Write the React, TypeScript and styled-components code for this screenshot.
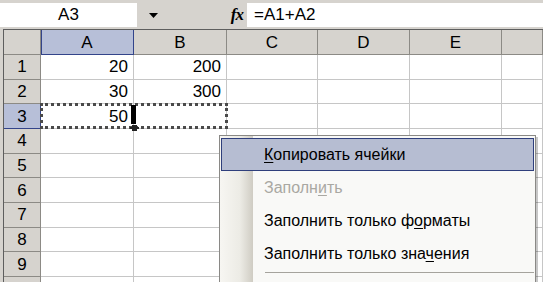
import React from 'react';
import styled, { createGlobalStyle } from 'styled-components';

const GlobalStyle = createGlobalStyle`
  html, body {
    margin: 0;
    padding: 0;
    background: #d6d3ce;
  }
  body {
    font-family: "Liberation Sans", Arial, sans-serif;
  }
`;

const Window = styled.div`
  position: relative;
  width: 543px;
  height: 282px;
  overflow: hidden;
  background: #d6d3ce;
  color: #000;
`;

const FormulaBar = styled.div`
  display: flex;
  align-items: stretch;
  height: 24px;
  padding: 3px 0 2px;
  font-size: 17px;
`;

const NameBox = styled.div`
  width: 137px;
  background: #fff;
  display: flex;
  align-items: center;
  justify-content: center;
`;

const DropButton = styled.div`
  width: 32px;
  display: flex;
  align-items: center;
  justify-content: center;
  padding-right: 6px;
`;

const FxLabel = styled.div`
  width: 68px;
  display: flex;
  align-items: center;
  justify-content: flex-end;
  padding-right: 4px;
  font-family: "Liberation Serif", "Times New Roman", serif;
  font-style: italic;
  font-weight: bold;
  font-size: 17px;
  letter-spacing: -1px;
`;

const FormulaInput = styled.div`
  flex: 1;
  background: #fff;
  display: flex;
  align-items: center;
  padding-left: 7px;
`;

const Sheet = styled.div`
  position: relative;
  margin-left: 3px;
  border-left: 1px solid #5e5e5e;
  border-top: 1px solid #5e5e5e;
  display: grid;
  grid-template-columns: 37px 93px 93px 91px 92px 92px 1fr;
  grid-template-rows: 25px repeat(10, 24.67px);
  background: #fff;
  font-size: 17px;
`;

const HeaderCell = styled.div<{ $active?: boolean }>`
  box-sizing: border-box;
  display: flex;
  align-items: center;
  justify-content: center;
  background: ${({ $active }) => ($active ? '#b7bfd8' : '#d6d3ce')};
  border-right: 1px solid ${({ $active }) => ($active ? '#33448a' : '#8c8a85')};
  border-bottom: 1px solid ${({ $active }) => ($active ? '#33448a' : '#8c8a85')};
  padding-top: 1px;
`;

const ColHeader = styled(HeaderCell)<{ $activeLeft?: boolean }>`
  ${({ $activeLeft }) => ($activeLeft ? 'box-shadow: inset 1px 0 0 #33448a;' : '')}
`;

const Corner = styled(HeaderCell)``;

const RowHeader = styled(HeaderCell)``;

const Cell = styled.div`
  box-sizing: border-box;
  border-right: 1px solid #c6c6c6;
  border-bottom: 1px solid #c6c6c6;
  display: flex;
  align-items: center;
  justify-content: flex-end;
  padding: 1px 5px 0 0;
`;

const Marquee = styled.div`
  position: absolute;
  left: 36px;
  top: 73px;
  width: 188px;
  height: 26px;
  box-sizing: border-box;
  border: 3px dotted #4a4a4a;
  pointer-events: none;
`;

const FillCursor = styled.svg`
  position: absolute;
  left: 125px;
  top: 74px;
`;

const ContextMenu = styled.div`
  position: absolute;
  left: 219px;
  top: 135px;
  width: 317px;
  height: 170px;
  box-sizing: border-box;
  border: 1px solid #8a8986;
  padding: 2px 1px;
  background: linear-gradient(
    to right,
    #f7f6f2 0px,
    #ecebe5 20px,
    #cfccc3 33px,
    #f9f9f7 33px
  );
  box-shadow: 2px 2px 0 rgba(0, 0, 0, 0.22);
  font-size: 16px;
`;

const MenuItem = styled.div<{ $highlight?: boolean; $disabled?: boolean }>`
  box-sizing: border-box;
  height: 33px;
  display: flex;
  align-items: center;
  padding-left: 42px;
  border: 1px solid ${({ $highlight }) => ($highlight ? '#2f3f7c' : 'transparent')};
  background: ${({ $highlight }) => ($highlight ? '#b6bdd2' : 'transparent')};
  color: ${({ $disabled }) => ($disabled ? '#a9a8a2' : '#000')};

  u {
    text-underline-offset: 2px;
  }
`;

const Separator = styled.div`
  height: 1px;
  margin: 2px 0 0 44px;
  background: #a5a39d;
`;

const columns = ['A', 'B', 'C', 'D', 'E', ''];

const data: Record<number, string[]> = {
  1: ['20', '200'],
  2: ['30', '300'],
  3: ['50', ''],
};

const App: React.FC = () => {
  const rows = Array.from({ length: 10 }, (_, i) => i + 1);

  return (
    <>
      <GlobalStyle />
      <Window>
        <FormulaBar>
          <NameBox>A3</NameBox>
          <DropButton>
            <svg width="9" height="5" viewBox="0 0 9 5">
              <path d="M0 0 H9 L4.5 5 Z" fill="#000" />
            </svg>
          </DropButton>
          <FxLabel>fx</FxLabel>
          <FormulaInput>=A1+A2</FormulaInput>
        </FormulaBar>

        <Sheet>
          <Corner />
          {columns.map((c, i) => (
            <ColHeader key={c || 'f'} $active={i === 0} $activeLeft={i === 0}>
              {c}
            </ColHeader>
          ))}
          {rows.map((r) => (
            <React.Fragment key={r}>
              <RowHeader $active={r === 3}>{r}</RowHeader>
              {columns.map((c, i) => (
                <Cell key={c || 'f'}>{data[r]?.[i] ?? ''}</Cell>
              ))}
            </React.Fragment>
          ))}
          <Marquee />
          <FillCursor width="14" height="28" viewBox="0 0 14 28">
            <rect x="2" y="1" width="5" height="19" fill="#000" />
            <path d="M3 21 H8 V27 H3 Z M1 23 H10 V25 H1 Z" fill="#222" />
          </FillCursor>
        </Sheet>

        <ContextMenu>
          <MenuItem $highlight>
            <span>
              <u>К</u>опировать ячейки
            </span>
          </MenuItem>
          <MenuItem $disabled>
            <span>
              Заполн<u>и</u>ть
            </span>
          </MenuItem>
          <MenuItem>
            <span>
              Заполнить только ф<u>о</u>рматы
            </span>
          </MenuItem>
          <MenuItem>
            <span>
              Заполнить только зна<u>ч</u>ения
            </span>
          </MenuItem>
          <Separator />
        </ContextMenu>
      </Window>
    </>
  );
};

export default App;
